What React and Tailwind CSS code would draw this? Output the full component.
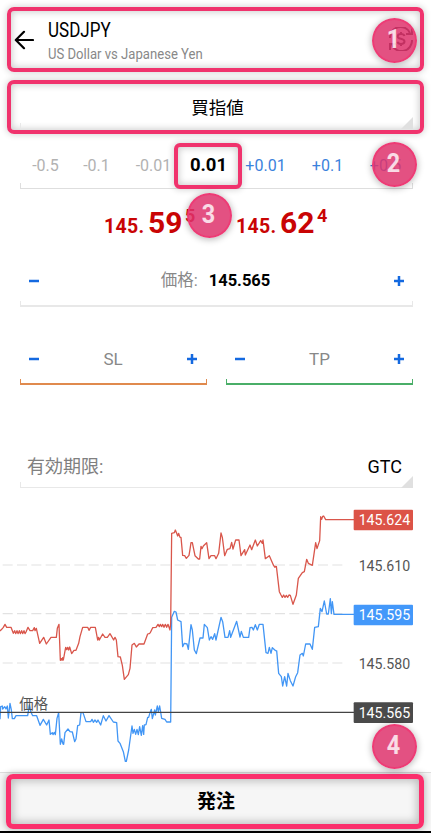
import clsx from "clsx"

const FRAME = "border-[#f0336d] shadow-[0_0_6px_1px_rgba(0,0,0,0.16),inset_0_0_7px_1px_rgba(0,0,0,0.2)]"

const steps = [
  { label: "-0.5", width: "w-[51px]", color: "text-[#b2b2b2]" },
  { label: "-0.1", width: "w-[51px]", color: "text-[#b2b2b2]" },
  { label: "-0.01", width: "w-[63px]", color: "text-[#b2b2b2]" },
  { label: "0.01", width: "w-[46px]", current: true },
  { label: "+0.01", width: "w-[69px]", color: "text-[#3b82dc]" },
  { label: "+0.1", width: "w-[55px]", color: "text-[#3b82dc]" },
  { label: "+0.5", width: "w-[61px]", color: "text-[#3b82dc]" },
]

const askLeft =
  "0,123 5,118 10,112 15,103 20,112 33,112 40,130 44,122 47,131 51,122 54,131 58,122 61,131 65,122 68,131 72,122 75,131 79,124 84,112 90,122 98,122 103,113 105,122 109,115 119,160 131,142 139,162 153,142 169,142 172,115 177,103 181,211 184,206 186,211 188,203 190,210 197,172 200,179 203,172 206,180 209,171 215,191 222,181 228,181 236,160 240,140 248,112 263,112 267,121 272,112 286,112 293,150 296,142 298,150 308,132 315,142 322,142 330,131 341,150 345,142 349,150 354,200 361,201 367,226 373,268 378,262 385,254 390,235 396,165 403,160 409,171 417,162 432,162 443,132 450,130"
const askMiddle =
  "30,370 38,353 48,352 54,343 58,350 61,343 65,350 68,343 72,352 76,343 80,352 84,343 90,360 92,340 95,70 103,68 106,60 110,70 113,78 116,70 120,82 123,82 128,136 134,137 139,145 147,136 150,118 153,98 157,98 165,137 175,147 179,147 183,109 186,116 190,108 200,98 207,146 213,137 224,137 228,146 236,130 243,69 247,82 254,137 262,118 270,116 275,97 279,117 287,90 297,90 303,137 314,119 316,135 330,105 335,119 346,90 352,108 362,92 367,100 369,90 376,146 388,137 400,165 405,172 409,168"
const askRight =
  "64,168 73,245 78,255 82,262 86,255 90,262 94,256 98,262 102,255 106,256 114,283 124,255 130,205 142,188 148,185 155,148 160,160 172,166 182,98 186,116 194,92 197,20 200,28 203,19 206,18 212,29 297,29"

const bidLeft =
  "0,388 2,350 7,348 8,357 14,350 18,357 22,348 25,384 30,340 34,360 37,386 43,386 48,377 83,377 88,345 93,367 98,377 110,377 120,406 130,388 140,405 147,390 151,433 157,428 159,434 163,427 166,434 171,385 176,368 181,463 185,447 189,462 191,463 195,428 204,417 210,425 217,426 224,455 228,447 233,407 239,405 243,368 249,368 258,395 272,395 276,388 280,397 285,390 290,397 294,390 302,405 310,377 318,393 327,377 340,396 350,398 354,453 360,460 370,485 376,514 379,514 386,480 396,408 399,430 403,418 407,433 411,418 415,434 419,410 424,436 428,407 431,433 433,405 438,404 443,382 446,382 450,368"
const bidMiddle =
  "30,608 34,598 37,626 44,600 46,615 52,588 55,605 59,588 65,625 75,628 80,636 92,636 95,322 103,304 108,306 113,330 123,335 128,410 133,400 141,402 145,418 153,344 157,360 163,420 169,431 180,384 189,384 193,343 202,353 208,390 213,380 218,388 224,371 228,390 243,322 248,335 255,382 264,382 269,362 272,382 290,334 300,381 304,364 310,382 326,382 330,353 336,352 340,360 346,344 352,360 358,343 369,343 378,428 384,430 388,412 393,430 397,413 407,422 410,422"
const bidRight =
  "65,422 71,490 79,500 83,528 89,500 95,528 99,490 106,512 114,528 122,500 128,488 135,435 142,430 145,438 152,402 165,402 172,418 179,352 190,350 196,295 201,305 208,273 215,312 220,312 226,266 229,311 232,275 237,313 297,313"

function Badge({ children, className }) {
  return (
    <div
      className={clsx(
        "absolute z-20 flex size-[45px] items-center justify-center rounded-full border-2 border-[#ee3a74]/90 bg-[#de336c]/85 shadow-[0_1px_6px_1px_rgba(0,0,0,0.25)]",
        className
      )}
    >
      <span className="-mt-[3px] -ml-[2px] scale-x-90 text-[26px] leading-none font-bold text-white/80">{children}</span>
    </div>
  )
}

function Tray({ color = "border-[#e8e8e8]", thick = true }) {
  return (
    <div
      className={clsx(
        "pointer-events-none absolute inset-x-0 bottom-0 h-[6px] border-x",
        thick ? "border-b-2" : "border-b",
        color
      )}
    />
  )
}

function Corner() {
  return (
    <svg viewBox="0 0 12 12" className="absolute right-0 bottom-0 size-3">
      <path d="M12 0V12H0Z" fill="#e0e0e0" />
    </svg>
  )
}

function Sign({ plus }) {
  return (
    <svg viewBox="0 0 10 10" className="size-[10px]" stroke="#1469e0" strokeWidth="2.5">
      <path d={plus ? "M0 5H10M5 0V10" : "M0 5H10"} />
    </svg>
  )
}

function Quote({ main, big, tip, className }) {
  return (
    <div className={clsx("flex items-baseline leading-none font-bold text-[#c90404]", className)}>
      <span className="w-[44px] text-[19.5px] tracking-[0.3px]">{main}</span>
      <span className="w-[37px] text-[30px]">{big}</span>
      <span className="relative -top-[11px] text-[18px]">{tip}</span>
    </div>
  )
}

function StopField({ label, color, className }) {
  return (
    <div className={clsx("relative flex h-[50px] items-center justify-between pb-[2px]", className)}>
      <Sign />
      <span className="text-[17px] leading-none text-[#888]">{label}</span>
      <Sign plus />
      <Tray color={color} />
    </div>
  )
}

function PriceTag({ y, fill, children }) {
  return (
    <g>
      <rect x="1061" y={y} width="178" height="62" rx="3" fill={fill} />
      <text x="1076" y={y + 47} fill="#fff" fontSize="42.5">{children}</text>
    </g>
  )
}

function Chart() {
  return (
    <svg viewBox="0 1500 1293 813" className="block h-[271px] w-[431px] shrink-0" fill="none" strokeLinejoin="round">
      <g stroke="#e2e2e2" strokeWidth="3.5" strokeDasharray="30 13">
        <path d="M8 1695H1033" />
        <path d="M8 1841H1033" />
        <path d="M8 1989H1033" />
      </g>
      <g stroke="#4296f5" strokeWidth="3.9">
        <polyline points={bidLeft} transform="translate(0 1770)" />
        <polyline points={bidMiddle} transform="translate(420 1530)" />
        <polyline points={bidRight} transform="translate(765 1530)" />
      </g>
      <g stroke="#d9564b" strokeWidth="3.9">
        <polyline points={askLeft} transform="translate(0 1770)" />
        <polyline points={askMiddle} transform="translate(420 1530)" />
        <polyline points={askRight} transform="translate(765 1530)" />
      </g>
      <path d="M0 2137H1062" stroke="#444" strokeWidth="3.5" />
      <text x="58" y="2126" fill="#555" fontSize="43">価格</text>
      <text x="1076" y="1714" fill="#555" fontSize="42.5">145.610</text>
      <text x="1076" y="2007" fill="#555" fontSize="42.5">145.580</text>
      <PriceTag y={1529} fill="#dc5347">145.624</PriceTag>
      <PriceTag y={1814} fill="#4398fa">145.595</PriceTag>
      <PriceTag y={2107} fill="#4a4a4a">145.565</PriceTag>
    </svg>
  )
}

export default function App() {
  return (
    <div className="relative flex h-[833px] w-[431px] flex-col overflow-hidden bg-white font-[Roboto,'Noto_Sans_CJK_JP',sans-serif] text-black">
      <header className={clsx("mx-[7px] mt-[7px] flex h-[65px] shrink-0 items-center rounded-[7px] border-4", FRAME)}>
        <svg viewBox="0 0 20 20" className="ml-[3px] size-5" fill="none" stroke="#000" strokeWidth="2.2" strokeLinecap="round" strokeLinejoin="round">
          <path d="M19 10H2M10 1.8L1.8 10L10 18.2" />
        </svg>
        <div className="mt-[5px] ml-[14px] w-[341px] shrink-0">
          <h1 className="w-[200px] origin-left scale-x-[0.83] text-[20.5px] leading-[24px]">USDJPY</h1>
          <p className="w-[200px] origin-left scale-x-[0.845] text-[15.5px] leading-[25px] text-[#888]">US Dollar vs Japanese Yen</p>
        </div>
        <svg viewBox="0 0 24 24" className="-mt-[2px] size-6 shrink-0" fill="none" stroke="#222" strokeWidth="2">
          <path d="M1 11A10.5 10.5 0 0 1 21 6M23 1V7H17M23 13A10.5 10.5 0 0 1 3 18M1 23V17H7" />
          <path d="M15.5 9C15 7.5 13.8 7 12 7C10 7 8.7 8 8.7 9.4C8.7 12.6 15.5 11 15.5 14.6C15.5 16 14 17 12 17C10 17 8.8 16.2 8.4 14.8M12 5V7M12 17V19" />
        </svg>
      </header>

      <div className={clsx("mx-[7px] mt-2 h-[54px] shrink-0 rounded-[7px] border-4 pr-[7px] pb-[1px] pl-[9px]", FRAME)}>
        <div className="relative flex h-full items-center justify-center pt-[3px] text-[17.5px]">
          <span className="relative left-[1px]">買指値</span>
          <Tray thick={false} />
          <Corner />
        </div>
      </div>

      <div className="relative mx-5 mt-2 flex h-[47px] w-[393px] shrink-0 items-center text-[16px]">
        <Tray thick={false} color="border-[#dedede]" />
        {steps.map((step) => (
          <div key={step.label} className={clsx("flex shrink-0 justify-center", step.width, step.color)}>
            {step.current ? (
              <div className={clsx("z-10 flex h-[46px] w-[68px] shrink-0 items-center justify-center rounded-[6px] border-4 bg-white pt-[1px] pl-[1px] text-[18.5px] font-bold", FRAME)}>
                {step.label}
              </div>
            ) : (
              step.label
            )}
          </div>
        ))}
      </div>

      <div className="flex h-[62px] shrink-0 pt-[19px] pl-[104px]">
        <Quote main="145." big="59" tip="5" className="w-[132px]" />
        <Quote main="145." big="62" tip="4" />
      </div>

      <div className="relative mx-5 mt-1 flex h-[52px] w-[393px] shrink-0 items-center justify-between px-[9px]">
        <Sign />
        <div className="flex items-baseline gap-[11px] pr-[2px] text-[16.5px] leading-none">
          <span className="text-[#888]">価格:</span>
          <span className="font-bold">145.565</span>
        </div>
        <Sign plus />
        <Tray />
      </div>

      <div className="mx-5 mt-7 flex w-[393px] shrink-0 justify-between">
        <StopField label="SL" color="border-[#e08a4e]" className="w-[187px] pr-[10px] pl-[9px]" />
        <StopField label="TP" color="border-[#4aae68]" className="w-[187px] px-[9px]" />
      </div>

      <div className="relative mx-5 mt-[61px] flex h-[42px] w-[393px] shrink-0 items-center justify-between pr-[11px] pl-[7px] text-[18px] leading-none">
        <span className="text-[#808080]">有効期限:</span>
        <span>GTC</span>
        <Tray thick={false} />
        <Corner />
      </div>

      <div className="mt-3 mb-[1px] shrink-0">
        <Chart />
      </div>

      <footer className="h-[61px] shrink-0 border-t border-b-2 border-t-[#ddd] border-b-black bg-[#f6f6f6] px-[6px] pt-[1px]">
        <button className="flex h-[55px] w-[418px] items-center justify-center rounded-[7px] border-5 border-[#fb2f6c] pt-[2px] pl-[2px] text-[19px] font-bold shadow-[0_0_6px_1px_rgba(0,0,0,0.25),inset_0_0_8px_2px_rgba(0,0,0,0.24)]">
          発注
        </button>
      </footer>

      <Badge className="top-[18px] left-[372px]">1</Badge>
      <Badge className="top-[142px] left-[372px]">2</Badge>
      <Badge className="top-[193px] left-[187px]">3</Badge>
      <Badge className="top-[724px] left-[372px]">4</Badge>
    </div>
  )
}
